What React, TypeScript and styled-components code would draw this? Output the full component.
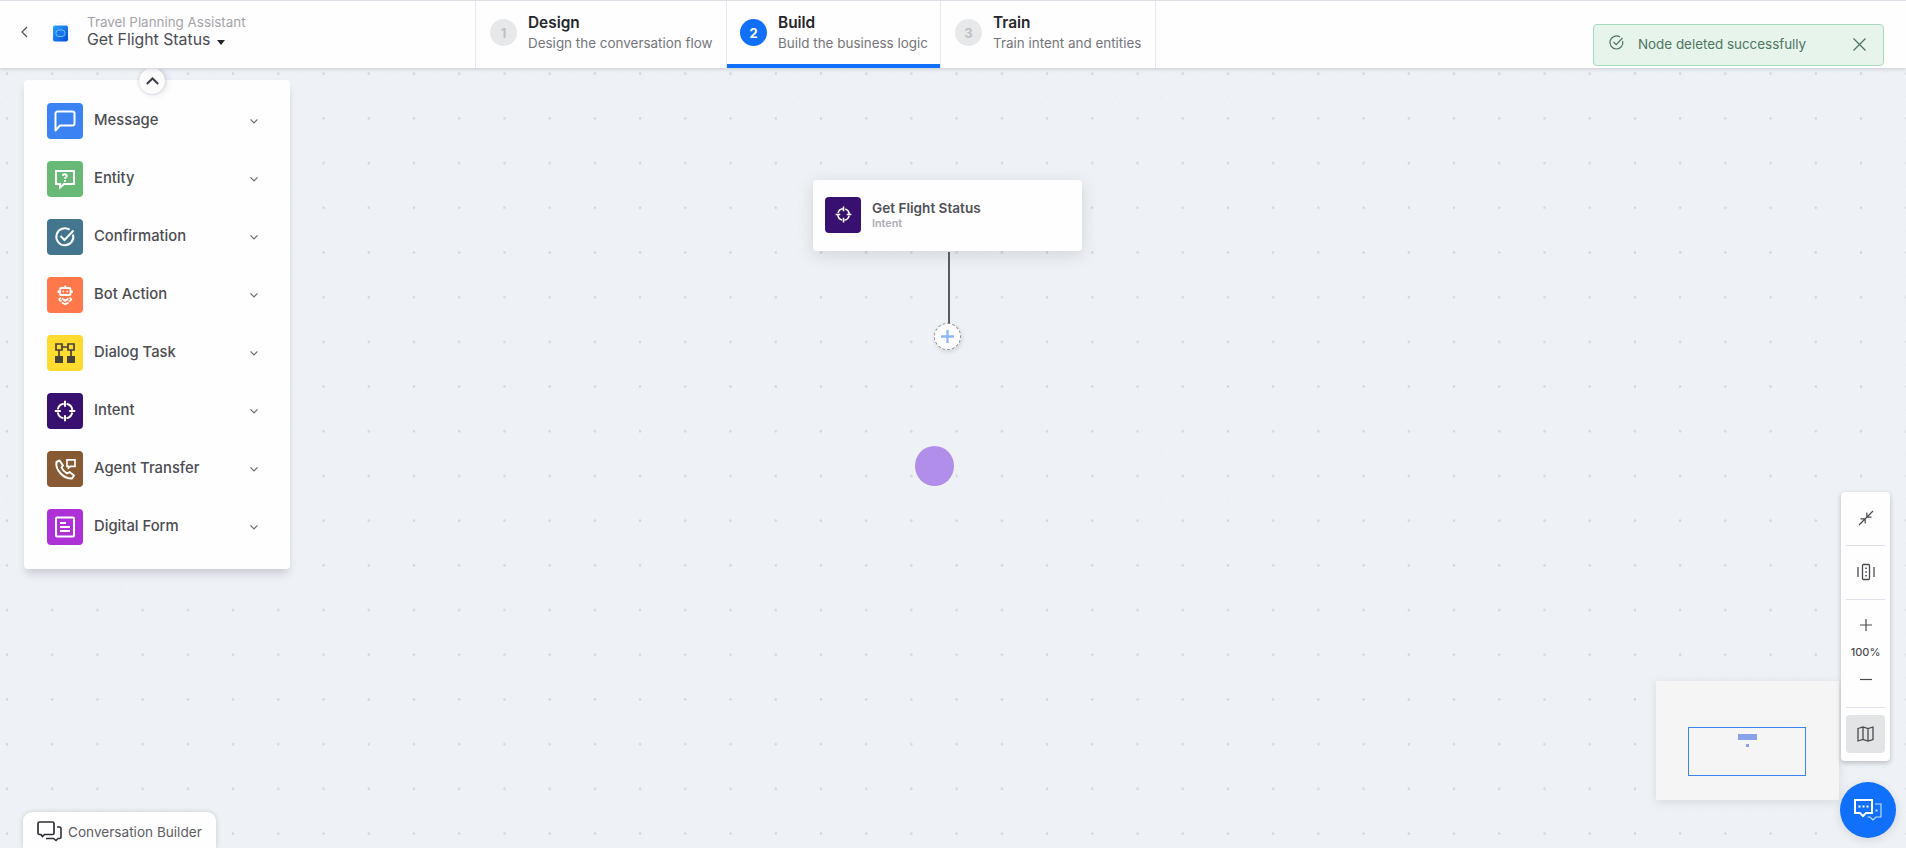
import React from "react";
import styled, { createGlobalStyle, css } from "styled-components";

const Global = createGlobalStyle`
  *, *::before, *::after { box-sizing: border-box; }
  body { margin: 0; overflow: hidden; font-family: Inter, "Liberation Sans", sans-serif; color: #3d3f45; }
`;

const Page = styled.div`
  height: 848px;
  display: flex;
  flex-direction: column;
  background: #eef1f5;
`;

const Header = styled.header`
  position: relative;
  z-index: 3;
  display: flex;
  height: 68px;
  margin-bottom: 1px;
  flex: none;
  background: #fefefe;
  border-top: 1px solid #dedfe4;
  box-shadow: 0 1px 4px rgba(60, 64, 80, 0.22);
`;

const Brand = styled.div`
  width: 475px;
  display: flex;
  padding-left: 20px;
`;

const BackIcon = styled.svg`
  width: 9px;
  height: 12px;
  margin-top: 25px;
`;

const Logo = styled.svg`
  width: 22px;
  height: 22px;
  margin: 21px 0 0 20px;
`;

const Titles = styled.div`
  margin: 12px 0 0 16px;
`;

const AppName = styled.div`
  font-size: 13.4px;
  line-height: 18px;
  color: #a4a4a8;
`;

const TaskName = styled.div`
  display: flex;
  align-items: center;
  font-size: 15.8px;
  line-height: 18px;
  color: #4c4d53;
`;

const Caret = styled.span`
  margin: 5px 0 0 7px;
  border: 4.5px solid transparent;
  border-top: 5px solid #25262a;
  border-bottom: 0;
`;

const Step = styled.div<{ $active?: boolean; $width: number }>`
  display: flex;
  width: ${(p) => p.$width}px;
  padding: 11px 0 0 14px;
  border-left: 1px solid #e8e9ee;
  ${(p) =>
    p.$active &&
    css`
      padding-left: 13px;
      box-shadow: inset 0 -4px #1170fb;
    `}
`;

const StepEnd = styled.div`
  border-left: 1px solid #e8e9ee;
`;

const StepNumber = styled.div<{ $active?: boolean }>`
  width: 27px;
  height: 27px;
  margin: 7px 11px 0 0;
  border-radius: 50%;
  display: grid;
  place-items: center;
  font-size: 13px;
  font-weight: 700;
  background: ${(p) => (p.$active ? "#1170fb" : "#e7e8ea")};
  color: ${(p) => (p.$active ? "#fff" : "#bfc0c4")};
`;

const StepTitle = styled.div`
  font-size: 15.4px;
  font-weight: 600;
  line-height: 21px;
  color: #26272c;
`;

const StepHint = styled.div`
  font-size: 13.45px;
  line-height: 20px;
  white-space: nowrap;
  color: #74767b;
`;

const Toast = styled.div`
  position: absolute;
  top: 23px;
  left: 1593px;
  width: 291px;
  height: 42px;
  display: flex;
  align-items: center;
  padding: 0 17px 2px 15px;
  border: 1px solid #a9d9bd;
  border-radius: 4px;
  background: #e7f4ec;
  font-size: 13.4px;
  color: #4e7560;

  span { flex: 1; margin-left: 14px; }
  svg:first-child { margin-bottom: 3px; }
`;

const Canvas = styled.main`
  position: relative;
  flex: 1;
  overflow: hidden;
`;

const DotGrid = styled.svg`
  display: block;
  width: 100%;
  height: 100%;
`;

const Palette = styled.aside`
  position: absolute;
  left: 24px;
  top: 11px;
  width: 266px;
  height: 489px;
  padding: 23px 32px 0 23px;
  display: flex;
  flex-direction: column;
  gap: 22px;
  background: #fefefe;
  border-radius: 4px;
  box-shadow: 0 6px 9px -2px rgba(60, 60, 70, 0.22);
`;

const Collapse = styled.div`
  position: absolute;
  top: -12px;
  left: 115px;
  width: 26px;
  height: 26px;
  border-radius: 50%;
  display: grid;
  place-items: center;
  background: #fbfbfc;
  box-shadow: 0 0 3px rgba(60, 70, 100, 0.28), 3px 1px 7px rgba(60, 70, 100, 0.1);
`;

const PaletteRow = styled.div`
  display: flex;
  align-items: center;
  height: 36px;
  font-size: 14.8px;
  font-weight: 550;
  color: #4b4c52;
`;

const Tile = styled.div<{ $color: string }>`
  width: 36px;
  height: 36px;
  flex: none;
  border-radius: 4px;
  display: grid;
  place-items: center;
  color: #fff;
  background: ${(p) => p.$color};
`;

const RowLabel = styled.span`
  flex: 1;
  margin: -3px 0 0 11px;
`;

const Line = styled.svg`
  fill: none;
  stroke: currentColor;
  stroke-width: 2;
  overflow: visible;
`;

const FlowNode = styled.div`
  position: absolute;
  left: 813px;
  top: 111px;
  width: 269px;
  height: 71px;
  display: flex;
  align-items: center;
  padding: 0 0 2px 12px;
  background: #fefefe;
  border-radius: 4px;
  box-shadow: 0 4px 16px rgba(50, 50, 60, 0.15);
`;

const NodeText = styled.div`
  margin: 1px 0 0 11px;
`;

const NodeTitle = styled.div`
  font-size: 13.6px;
  font-weight: 570;
  line-height: 17px;
  color: #505156;
`;

const NodeKind = styled.div`
  font-size: 10.8px;
  font-weight: 570;
  line-height: 14px;
  color: #acadb1;
`;

const Connector = styled.div`
  position: absolute;
  left: 948px;
  top: 183px;
  width: 2px;
  height: 73px;
  background: #5b5b5d;
`;

const AddNode = styled.div`
  position: absolute;
  left: 934px;
  top: 254px;
  width: 27px;
  height: 27px;
  border-radius: 50%;
  display: grid;
  place-items: center;
  background: #fefefe;
  border: 1px dashed #929296;
  box-shadow: 1px 2px 4px rgba(50, 50, 60, 0.15);
  color: #8db6f5;
`;

const Pointer = styled.div`
  position: absolute;
  left: 915px;
  top: 377px;
  width: 39px;
  height: 40px;
  border-radius: 50%;
  background: #b18eea;
`;

const Minimap = styled.div`
  position: absolute;
  left: 1656px;
  top: 612px;
  width: 183px;
  height: 119px;
  padding: 46px 0 0 32px;
  background: #f5f5f5;
  box-shadow: 0 2px 9px rgba(60, 60, 70, 0.13);
`;

const Viewport = styled.div`
  width: 118px;
  height: 49px;
  border: 1px solid #3b83ee;
  display: flex;
  flex-direction: column;
  align-items: center;
  padding-top: 6px;
  gap: 4px;
`;

const MiniNode = styled.div<{ $w: number; $h: number }>`
  width: ${(p) => p.$w}px;
  height: ${(p) => p.$h}px;
  background: #86a2e8;
`;

const Tools = styled.div`
  position: absolute;
  left: 1841px;
  top: 423px;
  width: 49px;
  height: 269px;
  padding: 0 5px;
  display: flex;
  flex-direction: column;
  background: #fefefe;
  border-radius: 4px;
  box-shadow: 0 2px 5px rgba(50, 50, 60, 0.28);
  color: #4a4b50;
`;

const ToolCell = styled.div<{ $h: number }>`
  height: ${(p) => p.$h}px;
  display: grid;
  place-items: center;
  padding-bottom: 1px;
  border-bottom: 1px solid #dfe1ea;
`;

const ZoomCell = styled.div`
  height: 108px;
  display: flex;
  flex-direction: column;
  align-items: center;
  padding-top: 19px;
  border-bottom: 1px solid #dfe1ea;
  font-size: 11px;
  font-weight: 500;

  span { line-height: 14px; margin: 14px 0 14px; }
`;

const MapButton = styled.div`
  height: 38px;
  margin-top: 7px;
  border-radius: 4px;
  display: grid;
  place-items: center;
  background: #e3e4e5;
`;

const ChatButton = styled.div`
  position: absolute;
  left: 1839.5px;
  top: 713px;
  width: 56px;
  height: 56px;
  border-radius: 50%;
  display: grid;
  place-items: center;
  background: #1170fb;
  color: #fff;
  box-shadow: 0 2px 10px rgba(50, 50, 60, 0.14);
`;

const BuilderTab = styled.div`
  position: absolute;
  left: 23px;
  bottom: 0;
  width: 193px;
  height: 36px;
  padding: 3px 0 0 14px;
  display: flex;
  align-items: center;
  background: #fefefe;
  border-radius: 9px 9px 0 0;
  box-shadow: 0 0 5px rgba(50, 50, 60, 0.2);
  font-size: 13.6px;
  color: #5c5d61;

  span { margin: 1px 0 0 6px; }
  svg { margin-bottom: 1px; }
`;

const Chevron = () => (
  <Line width="8" height="5" viewBox="0 0 8 5" color="#6c6d73">
    <path d="M.5 .3 4 3.800 7.500 .3" strokeWidth="1.200" />
  </Line>
);

const Crosshair = ({ size = 22 }: { size?: number }) => (
  <Line width={size} height={size} viewBox="0 0 22 22">
    <circle cx="11" cy="11" r="7.4" strokeDasharray="8.6 3.02" strokeDashoffset="-1.5" />
    <path d="M11 .8v6M11 15.2v6M.8 11h6M15.2 11h6" />
  </Line>
);

const items: { label: string; color: string; icon: React.ReactNode }[] = [
  {
    label: "Message",
    color: "#3b83f3",
    icon: <Line width="22" height="22" viewBox="0 0 22 22"><path d="M1.5 20.500V3.500a2 2 0 0 1 2-2h15a2 2 0 0 1 2 2v10a2 2 0 0 1-2 2H6z" strokeLinejoin="round" /></Line>,
  },
  {
    label: "Entity",
    color: "#68b876",
    icon: (
      <Line width="22" height="22" viewBox="0 0 22 22">
        <path d="M2 3h18v13H10l-4 3.500V16H2z" />
        <path d="M8.800 7.800C9 5.600 13 5.800 12.800 8c-.1 1.200-1.800 1.300-1.800 2.800M11 12v1.800" />
      </Line>
    ),
  },
  {
    label: "Confirmation",
    color: "#43758f",
    icon: (
      <Line width="22" height="22" viewBox="0 0 22 22">
        <path d="M19 8.400A8.500 8.500 0 1 1 15.600 3.700" />
        <path d="m6.500 10 4 4L19.500 4.500" />
      </Line>
    ),
  },
  {
    label: "Bot Action",
    color: "#ff784b",
    icon: (
      <Line width="22" height="22" viewBox="0 0 22 22">
        <rect x="6" y="4" width="10.500" height="7" rx="1" strokeWidth="1.800" />
        <path d="M11.200 1.500V4M8.500 7.500h1.600M12.400 7.500H14M4.400 6.500v2.500M18 6.500v2.500" strokeWidth="1.700" />
        <path d="M7 13.800c-2.500.6-2.300 3 .6 3.400M15.400 13.800c2.500.6 2.300 3-.6 3.400M8 14.500l3.200 2.300 3.200-2.300M7.800 18.500l3.400 1.700 3.400-1.700" strokeWidth="1.800" />
      </Line>
    ),
  },
  {
    label: "Dialog Task",
    color: "#ffdb2f",
    icon: (
      <Line width="22" height="22" viewBox="0 0 22 22" color="#45423a">
        <path d="M2 2h6v6H2zM14 2h6v6h-6zM8 5h6M5 8v6M17 8v6" strokeWidth="1.700" />
        <path d="M2 15h6v5H2zM14 15h6v5h-6z" fill="currentColor" />
      </Line>
    ),
  },
  { label: "Intent", color: "#38106f", icon: <Crosshair /> },
  {
    label: "Agent Transfer",
    color: "#875a34",
    icon: (
      <Line width="22" height="22" viewBox="0 0 22 22">
        <path d="M5.500 2.500 2.500 4C1 12 10 21 18 20.500l2-3-4.500-3.500-2.500 1.500C10.500 14 8.500 12 7.500 9.500L9 7.500z" strokeLinejoin="round" />
        <path d="M13 1.800h8v6.500h-4.500L14.500 10V8.300H13z" strokeWidth="1.700" />
      </Line>
    ),
  },
  {
    label: "Digital Form",
    color: "#ad31d7",
    icon: (
      <Line width="22" height="22" viewBox="0 0 22 22">
        <rect x="2" y="1.500" width="18" height="19" rx="1" />
        <path d="M6 7h6M6 11h10M6 15h10" />
      </Line>
    ),
  },
];

export default function App() {
  return (
    <Page>
      <Global />
      <Header>
        <Brand>
          <BackIcon viewBox="0 0 9 12"><path d="M7 1 2 6l5 5" fill="none" stroke="#55565b" strokeWidth="1.300" /></BackIcon>
          <Logo viewBox="0 0 22 22">
            <defs>
              <linearGradient id="logo" x1="0" y1="0" x2="1" y2="1">
                <stop offset="0" stopColor="#28a4fb" />
                <stop offset="1" stopColor="#084bd8" />
              </linearGradient>
            </defs>
            <circle cx="11.500" cy="11" r="10.300" fill="#fff" stroke="#eef3fb" />
            <rect x="4" y="3.500" width="15" height="16" rx="2" fill="url(#logo)" />
            <rect x="7" y="8" width="9" height="6.500" rx="3" fill="#1875ec" stroke="#73c0ff" />
          </Logo>
          <Titles>
            <AppName>Travel Planning Assistant</AppName>
            <TaskName>Get Flight Status<Caret /></TaskName>
          </Titles>
        </Brand>
        <Step $width={251}>
          <StepNumber>1</StepNumber>
          <div><StepTitle>Design</StepTitle><StepHint>Design the conversation flow</StepHint></div>
        </Step>
        <Step $active $width={214}>
          <StepNumber $active>2</StepNumber>
          <div><StepTitle>Build</StepTitle><StepHint>Build the business logic</StepHint></div>
        </Step>
        <Step $width={215}>
          <StepNumber>3</StepNumber>
          <div><StepTitle>Train</StepTitle><StepHint>Train intent and entities</StepHint></div>
        </Step>
        <StepEnd />
        <Toast>
          <Line width="15" height="15" viewBox="0 0 15 15">
            <path d="M13.700 6A6.500 6.500 0 1 1 11 2.100M4.500 7l2.700 2.700L13.500 3" strokeWidth="1.200" />
          </Line>
          <span>Node deleted successfully</span>
          <Line width="13" height="13" viewBox="0 0 13 13"><path d="m.5.5 12 12M12.500.5l-12 12" strokeWidth="1.300" /></Line>
        </Toast>
      </Header>
      <Canvas>
        <DotGrid>
          <defs>
            <pattern id="dots" x="-15.600" y="-17.700" width="45.220" height="44.700" patternUnits="userSpaceOnUse">
              <circle cx="22.600" cy="22.400" r="1.200" fill="#d0d3d7" />
              <circle cx="0.800" cy="0.800" r="0.700" fill="#e5e8eb" />
              <circle cx="22.600" cy="0.800" r="0.700" fill="#e5e8eb" />
              <circle cx="0.800" cy="22.400" r="0.700" fill="#e5e8eb" />
            </pattern>
          </defs>
          <rect width="100%" height="100%" fill="url(#dots)" />
        </DotGrid>
        <Palette>
          <Collapse><Line width="13" height="8" viewBox="0 0 13 8"><path d="M.8 7 6.500 1.500 12.200 7" /></Line></Collapse>
          {items.map((it) => (
            <PaletteRow key={it.label}>
              <Tile $color={it.color}>{it.icon}</Tile>
              <RowLabel>{it.label}</RowLabel>
              <Chevron />
            </PaletteRow>
          ))}
        </Palette>
        <FlowNode>
          <Tile $color="#38106f"><Crosshair size={17} /></Tile>
          <NodeText><NodeTitle>Get Flight Status</NodeTitle><NodeKind>Intent</NodeKind></NodeText>
        </FlowNode>
        <Connector />
        <AddNode><Line width="13" height="13" viewBox="0 0 13 13"><path d="M6.500 0v13M0 6.500h13" strokeWidth="2.300" /></Line></AddNode>
        <Pointer />
        <Minimap>
          <Viewport><MiniNode $w={19} $h={6} /><MiniNode $w={3} $h={3} /></Viewport>
        </Minimap>
        <Tools>
          <ToolCell $h={54}>
            <Line width="14" height="14" viewBox="0 0 14 14"><path d="M0 14 14 0M1.500 7.800H6.200V12.500M7.800 1.500V6.200H12.500" strokeWidth="1.200" /></Line>
          </ToolCell>
          <ToolCell $h={54}>
            <Line width="18" height="16" viewBox="0 0 18 16">
              <rect x="5.500" y=".5" width="7" height="15" rx="1" strokeWidth="1.300" />
              <path d="M1 3v10M17 3v10" strokeWidth="1.300" />
              <path d="M9 3.500v1.500M9 7.300v1.500M9 11v1.500" strokeWidth="1.600" />
            </Line>
          </ToolCell>
          <ZoomCell>
            <Line width="12" height="12" viewBox="0 0 12 12"><path d="M6 0v12M0 6h12" strokeWidth="1.200" /></Line>
            <span>100%</span>
            <Line width="12" height="12" viewBox="0 0 12 12"><path d="M0 6.500h12" strokeWidth="1.200" /></Line>
          </ZoomCell>
          <MapButton>
            <Line width="17" height="16" viewBox="0 0 17 16"><path d="M1 2.500 6 1l5 1.500L16 1v12.500L11 15l-5-1.500L1 15zM6 1v12.500M11 2.500V15" strokeWidth="1.300" /></Line>
          </MapButton>
        </Tools>
        <ChatButton>
          <Line width="28" height="22" viewBox="0 0 28 22">
            <path d="M1 1h17v13h-6l-3 3-3-3H1z" />
            <path d="M4.500 7.500h2M8.500 7.500h2M12.500 7.500h2" />
            <path d="M21 5h6v13h-5l-3 3-3-3h-2.500" strokeWidth="1.200" opacity=".75" />
            <path d="M21.500 11.500h2" opacity=".8" />
          </Line>
        </ChatButton>
        <BuilderTab>
          <Line width="25" height="21" viewBox="0 0 25 21" color="#303136">
            <path d="M2.500 1h13a1.500 1.500 0 0 1 1.500 1.500v9.500a1.500 1.500 0 0 1-1.500 1.500H7.500L5.500 15.500 4 13.500H2.500A1.500 1.500 0 0 1 1 12V2.500A1.500 1.500 0 0 1 2.500 1z" strokeWidth="1.700" />
            <path d="M20 6h2.500a1.500 1.500 0 0 1 1.500 1.500V16a1.500 1.500 0 0 1-1.500 1.500H21L19 19.500 16.500 17.500H9" strokeWidth="1.600" />
          </Line>
          <span>Conversation Builder</span>
        </BuilderTab>
      </Canvas>
    </Page>
  );
}
